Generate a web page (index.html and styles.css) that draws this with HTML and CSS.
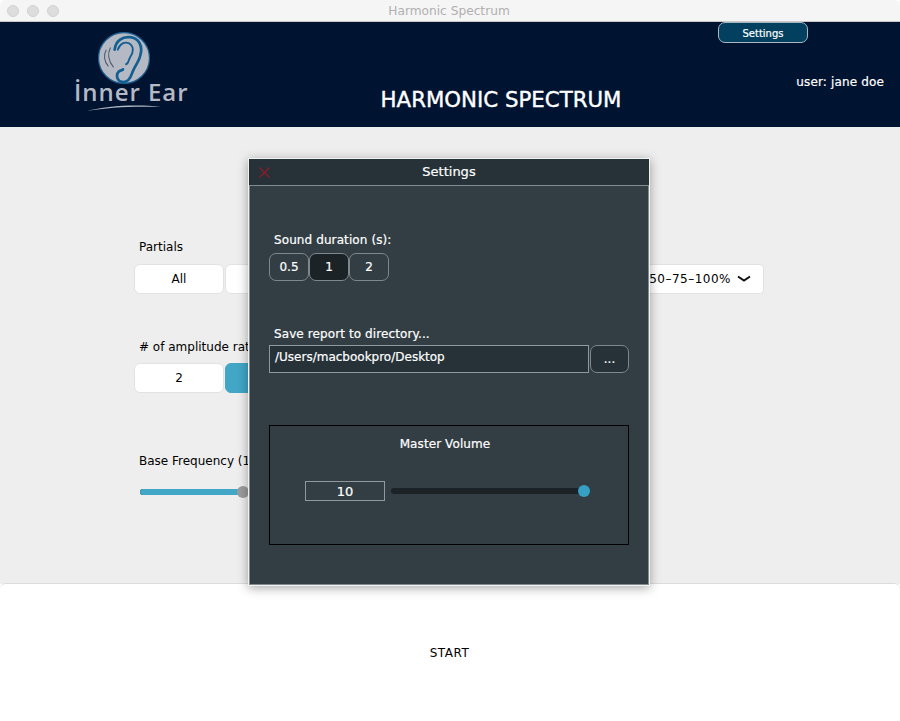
FILE: index.html
```html
<!DOCTYPE html>
<html lang="en">
<head>
    <meta charset="UTF-8">
    <title>Harmonic Spectrum</title>
    <link rel="stylesheet" href="styles.css">
</head>
<body>
<div class="window">
    <div class="titlebar">
        <div class="lights"><i></i><i></i><i></i></div>
        <div class="window-title">Harmonic Spectrum</div>
    </div>
    <div class="header">
        <div class="logo-box">
            <div class="logo">
                <svg class="ear" viewBox="0 0 50 50" width="52" height="52">
                    <circle cx="25" cy="25" r="24.5" fill="#b4b9c4" stroke="#1d5f8f" stroke-width="1.2"/>
                    <path d="M16 17C17 8 24 4 31 5C39 6 43 13 41 21C40 28 36 31 33 39C31 45 28 49 23 48C18 47 17 41 20 38C22 36 24 37 24 36" fill="none" stroke="#135f92" stroke-width="2.6" stroke-linecap="round"/>
                    <path d="M19 17C21 11 26 9 30 11C35 14 34 20 31 24C29 27 30 30 27 31" fill="none" stroke="#135f92" stroke-width="1.8" stroke-linecap="round"/>
                    <path d="M12 15C9 21 10 28 15 34M8 17C5 22 6 29 10 33" fill="none" stroke="#4b5a6b" stroke-width="1"/>
                </svg>
                <div class="logo-text">İnner Ear</div>
                <svg class="swoosh" viewBox="0 0 76 8" width="76" height="8">
                    <path d="M1 7C20 2 50 0 75 3C50 2 22 3 1 7Z" fill="#b4b9c4"/>
                </svg>
            </div>
        </div>
        <h1 class="app-title">HARMONIC SPECTRUM</h1>
        <div class="header-right">
            <button class="settings-btn">Settings</button>
            <div class="user">user: jane doe</div>
        </div>
    </div>
    <div class="main">
        <div class="row row-partials">
            <div class="group">
                <div class="label">Partials</div>
                <div class="btns">
                    <button class="btn">All</button>
                    <button class="btn">Odd</button>
                </div>
            </div>
            <div class="select">25–50–75–100%
                <svg viewBox="0 0 14 8" width="14" height="8"><path d="M1 1.5L7 5.5L13 1.5" fill="none" stroke="#111" stroke-width="2"/></svg>
            </div>
        </div>
        <div class="row row-ratio">
            <div class="group">
                <div class="label">&#35; of amplitude ratios</div>
                <div class="btns">
                    <button class="btn">2</button>
                    <button class="btn on">3</button>
                </div>
            </div>
        </div>
        <div class="row row-freq">
            <div class="group">
                <div class="label">Base Frequency (100 Hz)</div>
                <div class="slider">
                    <div class="slider-fill"></div>
                    <div class="slider-thumb"></div>
                </div>
            </div>
        </div>
    </div>
    <div class="footer">START</div>
</div>

<div class="modal">
    <div class="modal-head">
        <svg class="modal-close" viewBox="0 0 11 11" width="11" height="11"><path d="M0.5 0.5L10.5 10.5M10.5 0.5L0.5 10.5" stroke="#8e1a2c" stroke-width="1.2"/></svg>
        Settings
    </div>
    <div class="modal-body">
        <div class="m-label first">Sound duration (s):</div>
        <div class="seg">
            <button class="seg-btn">0.5</button>
            <button class="seg-btn active">1</button>
            <button class="seg-btn">2</button>
        </div>
        <div class="m-label second">Save report to directory...</div>
        <div class="dir-row">
            <div class="dir-input">/Users/macbookpro/Desktop</div>
            <button class="dir-btn">...</button>
        </div>
        <div class="volume">
            <div class="volume-title">Master Volume</div>
            <div class="volume-row">
                <div class="volume-value">10</div>
                <div class="volume-track"><div class="volume-thumb"></div></div>
            </div>
        </div>
    </div>
</div>
</body>
</html>
```

FILE: styles.css
```css
* {
    padding: 0;
    margin: 0;
    box-sizing: border-box;
}
html,body {
    width: 100%;
    height: 100%;
    overflow: hidden;
    background-color: #ffffff;
    font-family: "DejaVu Sans", sans-serif;
    font-size: 12px;
}
button {
    font-family: inherit;
    font-size: inherit;
}
.window {
    height: 721px;
    display: flex;
    flex-direction: column;
}
.titlebar {
    height: 22px;
    display: flex;
    align-items: center;
    background-color: #f5f5f5;
    border-bottom: 1px solid #c8c8c8;
    border-radius: 5px 5px 0 0;
}
.lights {
    width: 286px;
    display: flex;
    gap: 8px;
    padding-left: 7px;
}
.lights i {
    width: 12px;
    height: 12px;
    border-radius: 50%;
    background-color: #dddddd;
    border: 1px solid #d2d2d2;
}
.window-title {
    width: 326px;
    text-align: center;
    color: #b0b0b0;
    font-size: 12.2px;
}
.header {
    height: 105px;
    display: flex;
    background-color: #001330;
    color: #ffffff;
    -webkit-text-stroke: 0.2px #ffffff;
}
.logo-box {
    width: 284px;
    padding: 10px 0 0 74px;
}
.logo {
    width: 116px;
    display: flex;
    flex-direction: column;
}
.ear {
    margin-left: 24px;
}
.logo-text {
    margin-top: -7px;
    font-family: "Open Sans", sans-serif;
    font-size: 24px;
    font-weight: 600;
    line-height: 30px;
    letter-spacing: 0.95px;
    color: #b4b9c4;
    -webkit-text-stroke: 0;
    white-space: nowrap;
}
.swoosh {
    margin: -3px 0 0 12px;
}
.app-title {
    flex: 1;
    align-self: flex-end;
    padding-bottom: 13px;
    text-align: center;
    font-size: 21.3px;
    line-height: 28px;
    font-weight: 400;
    -webkit-text-stroke: 0.4px #ffffff;
}
.header-right {
    width: 182px;
}
.settings-btn {
    display: block;
    width: 90px;
    height: 21px;
    padding-top: 1px;
    background-color: #03405f;
    color: #ffffff;
    border: 1px solid #a9b8c0;
    border-radius: 7px;
    font-size: 10px;
    -webkit-text-stroke: 0.2px #ffffff;
}
.user {
    margin-top: 31px;
    padding-right: 16px;
    text-align: right;
    line-height: 16px;
    letter-spacing: 0.15px;
}
.main {
    flex: 1;
    padding: 112px 136px 0 134px;
    background-color: #eeeeee;
    color: #000000;
}
.row {
    display: flex;
    justify-content: space-between;
    align-items: flex-end;
}
.row-ratio {
    margin-top: 45px;
}
.row-freq {
    margin-top: 60px;
}
.label {
    height: 16px;
    line-height: 16px;
    padding-left: 5px;
    margin-bottom: 9px;
    white-space: nowrap;
}
.row-ratio .label {
    margin-bottom: 8px;
}
.btns {
    display: flex;
    gap: 1px;
}
.btn {
    width: 90px;
    height: 30px;
    background-color: #ffffff;
    border: 1px solid #e2e2e2;
    border-radius: 6px;
    color: #000000;
}
.btn.on {
    background-color: #42a6c6;
    border-color: #42a6c6;
}
.select {
    width: 190px;
    height: 30px;
    display: flex;
    align-items: center;
    justify-content: flex-end;
    gap: 6px;
    padding-right: 12px;
    background-color: #ffffff;
    border: 1px solid #e2e2e2;
    border-radius: 4px;
    letter-spacing: 0.5px;
}
.slider {
    width: 240px;
    height: 6px;
    margin: 20px 0 0 6px;
    display: flex;
    align-items: center;
    background-color: #1b2327;
    border-radius: 3px;
}
.slider-fill {
    width: 103px;
    height: 6px;
    background-color: #42a6c6;
    border-radius: 3px 0 0 3px;
}
.slider-thumb {
    width: 12px;
    height: 12px;
    margin-left: -6px;
    border-radius: 50%;
    background-color: #9b9b9b;
}
.footer {
    height: 138px;
    display: flex;
    align-items: center;
    justify-content: center;
    padding-right: 1px;
    background-color: #ffffff;
    border-top: 1px solid #dcdcdc;
    border-radius: 6px 6px 0 0;
    margin-top: -1px;
    color: #000000;
    letter-spacing: 0.5px;
}
/* dialog over the page */
.modal {
    position: absolute;
    left: 248px;
    top: 158px;
    width: 402px;
    height: 428px;
    display: flex;
    flex-direction: column;
    border: 1px solid #f2f2f2;
    box-shadow: 0 2px 10px rgba(0,0,0,0.35);
    color: #ffffff;
    background-color: #333e44;
    -webkit-text-stroke: 0.2px #ffffff;
}
.modal-head {
    position: relative;
    height: 27px;
    line-height: 26px;
    text-align: center;
    background-color: #263238;
    border-bottom: 1px solid #818b90;
    font-size: 13px;
}
.modal-close {
    position: absolute;
    left: 10px;
    top: 8px;
}
.modal-body {
    flex: 1;
    padding: 0 19px;
    border: 1px solid #818b90;
    border-top: 0;
}
.m-label {
    height: 16px;
    line-height: 16px;
    padding-left: 5px;
    letter-spacing: 0.1px;
}
.m-label.first {
    margin-top: 46px;
}
.m-label.second {
    margin-top: 45px;
}
.seg {
    display: flex;
    margin-top: 5px;
}
.seg-btn {
    width: 40px;
    height: 28px;
    background-color: #333e44;
    border: 1px solid #7d878c;
    border-radius: 7px;
    color: #ffffff;
    -webkit-text-stroke: 0.2px #ffffff;
}
.seg-btn.active {
    background-color: #1b2327;
}
.dir-row {
    display: flex;
    gap: 1px;
    margin-top: 3px;
}
.dir-input {
    width: 320px;
    height: 28px;
    line-height: 23px;
    padding-left: 5px;
    background-color: #263238;
    border: 1px solid #8f989c;
}
.dir-btn {
    width: 39px;
    height: 28px;
    background-color: #263238;
    border: 1px solid #7d878c;
    border-radius: 7px;
    color: #ffffff;
}
.volume {
    width: 360px;
    height: 120px;
    margin-top: 52px;
    padding-top: 10px;
    border: 1px solid #000000;
}
.volume-title {
    padding-right: 8px;
    line-height: 16px;
    text-align: center;
    letter-spacing: 0.1px;
}
.volume-row {
    display: flex;
    align-items: center;
    gap: 6px;
    margin-top: 29px;
    padding-left: 35px;
}
.volume-value {
    width: 80px;
    height: 20px;
    line-height: 19px;
    text-align: center;
    border: 1px solid #8f989c;
    font-size: 13px;
}
.volume-track {
    width: 194px;
    height: 6px;
    display: flex;
    align-items: center;
    justify-content: flex-end;
    background-color: #1b2327;
    border-radius: 3px;
}
.volume-thumb {
    width: 12px;
    height: 12px;
    margin-right: -5px;
    border-radius: 50%;
    background-color: #36a0c4;
}
```
